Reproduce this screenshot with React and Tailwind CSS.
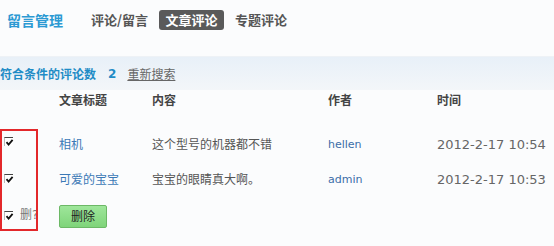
const CheckMark = () => (
  <span className="block w-[9px] h-[9px] border-t border-l border-t-[#444] border-l-[#bbb] bg-white">
    <svg width="9" height="9" viewBox="0 0 9 9" className="block">
      <path d="M1.5 4.2 L3.6 6.6 L7.6 1.8" fill="none" stroke="#111" strokeWidth="1.8" />
    </svg>
  </span>
);

export default function App() {
  const rows = [
    { title: "相机", content: "这个型号的机器都不错", author: "hellen", time: "2012-2-17 10:54" },
    { title: "可爱的宝宝", content: "宝宝的眼睛真大啊。", author: "admin", time: "2012-2-17 10:53" },
  ];

  return (
    <div className="w-[554px] h-[246px] overflow-hidden bg-[#fbfcfd] font-['DejaVu_Sans','Noto_Sans_CJK_SC',sans-serif]">
      {/* 顶部标题和标签 */}
      <div className="h-[56px] pt-[10px] flex items-start">
        <div className="h-[20px] flex items-center pl-[7px] text-[14px] font-bold text-[#2c9ad3] font-['Noto_Sans_CJK_SC',sans-serif]">
          留言管理
        </div>
        <div className="h-[20px] flex items-center ml-[28px] text-[13px] font-bold text-[#555] font-['Noto_Sans_CJK_SC',sans-serif]">
          <span className="w-[68px]">评论/留言</span>
          <span className="h-[20px] w-[65px] flex items-center justify-center rounded-[3px] bg-[#5a5a5a] text-white">
            文章评论
          </span>
          <span className="ml-[11px]">专题评论</span>
        </div>
      </div>

      {/* 搜索结果条 */}
      <div className="h-[34px] flex items-center border-t border-[#eef2f6] bg-gradient-to-b from-[#e8f0f8] to-[#f3f6f9] text-[12px]">
        <span className="font-bold text-[#1f8cc6] font-['Noto_Sans_CJK_SC',sans-serif]">符合条件的评论数</span>
        <span className="ml-[12px] font-bold text-[#1f8cc6]">2</span>
        <a href="#" className="ml-[11px] text-[#666] underline font-['Noto_Sans_CJK_SC',sans-serif]">重新搜索</a>
      </div>

      {/* 表头 */}
      <div className="h-[22px] pl-[59px] grid grid-cols-[93px_176px_109px_1fr] items-center text-[12px] font-bold text-[#444]">
        <span>文章标题</span>
        <span>内容</span>
        <span>作者</span>
        <span>时间</span>
      </div>

      <div className="flex mt-[17px]">
        {/* 勾选列 */}
        <div className="w-[38px] h-[102px] border-2 border-[#e3282b] overflow-hidden flex flex-col pl-[2px] pt-[6px]">
          <div className="h-[37px] flex items-start"><CheckMark /></div>
          <div className="h-[37px] flex items-start"><CheckMark /></div>
          <div className="h-[12px] flex items-center whitespace-nowrap -mt-[2px]">
            <CheckMark />
            <span className="ml-[7px] text-[12px] leading-none text-[#777]">删?</span>
          </div>
        </div>

        <div className="ml-[21px] flex-1">
          {rows.map((r, i) => (
            <div key={i} className={`${i === 0 ? "h-[32px]" : "h-[38px]"} grid grid-cols-[93px_176px_109px_1fr] items-center`}>
              <a href="#" className="text-[12px] text-[#3b79b6]">{r.title}</a>
              <span className="text-[12px] text-[#555]">{r.content}</span>
              <a href="#" className="text-[11px] text-[#3b6ea8]">{r.author}</a>
              <span className="text-[13px] text-[#666] whitespace-nowrap">{r.time}</span>
            </div>
          ))}
          <button className="mt-[6px] h-[23px] w-[48px] rounded-[2px] border border-[#6cb866] bg-gradient-to-b from-[#9ee69a] to-[#7fd47a] text-[12px] text-[#222]">
            删除
          </button>
        </div>
      </div>
    </div>
  );
}
